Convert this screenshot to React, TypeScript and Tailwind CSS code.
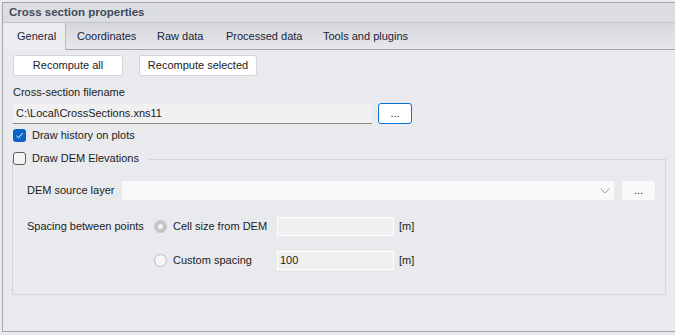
import React from "react";

const tabs = [
  { label: "General", w: "w-[63px]" },
  { label: "Coordinates", w: "w-[80px]" },
  { label: "Raw data", w: "w-[69px]" },
  { label: "Processed data", w: "w-[97px]" },
  { label: "Tools and plugins", w: "w-[110px]" },
];

function Checkbox({ checked }: { checked?: boolean }) {
  if (checked) {
    return (
      <span className="flex h-[13px] w-[13px] items-center justify-center rounded-[3px] bg-[#0a62c9]">
        <svg width="9" height="9" viewBox="0 0 9 9">
          <path d="M1.5 4.8 L3.6 6.8 L7.5 2.2" fill="none" stroke="#ffffff" strokeWidth="1" />
        </svg>
      </span>
    );
  }
  return <span className="h-[13px] w-[13px] rounded-[3px] border border-[#5f5f5f] bg-[#f4f4f4]" />;
}

function Radio({ checked }: { checked?: boolean }) {
  if (checked) {
    return (
      <span className="flex h-[13px] w-[13px] items-center justify-center rounded-full bg-[#c4c5c8]">
        <span className="h-[5px] w-[5px] rounded-full bg-[#f4f4f4]" />
      </span>
    );
  }
  return <span className="h-[13px] w-[13px] rounded-full border border-[#b9babd] bg-[#f6f6f7]" />;
}

export default function App() {
  return (
    <div
      className="h-[335px] w-[675px] overflow-hidden bg-[#e9eaee] pt-[2px] pl-[2px] text-[11px] text-[#1b1b1b]"
      style={{ fontFamily: '"Liberation Sans", Arial, sans-serif' }}
    >
      <div className="flex h-[330px] flex-col border-t border-l border-b border-[#a5a6a9]">
        <div className="flex h-[20px] items-center border-b border-[#c4c5c9] bg-[#dcdde1] pl-[6px] pt-px text-[11.5px] font-bold text-[#3f4b5c]">
          Cross section properties
        </div>
        <div className="flex h-[27px] items-stretch border-b border-[#a2a3a6] bg-gradient-to-b from-[#d6d7db] to-[#e7e8ec]">
          {tabs.map((t, i) => (
            <div
              key={t.label}
              className={
                i === 0
                  ? `-mb-px flex ${t.w} items-center border-r border-[#b7b8bb] bg-[#ebecf0] pl-[14px] text-[#1d1d3a]`
                  : `flex ${t.w} shrink-0 items-center pl-[11px] text-[#1d1d3a]`
              }
            >
              {t.label}
            </div>
          ))}
        </div>

        <div className="flex flex-1 flex-col px-[10px]">
          <div className="mt-[5px] flex gap-[16px]">
            <button className="h-[21px] w-[110px] rounded-[3px] border border-[#d3d4d7] bg-white text-[#1b1b1b]">
              Recompute all
            </button>
            <button className="h-[21px] w-[118px] rounded-[3px] border border-[#d3d4d7] bg-white text-[#1b1b1b]">
              Recompute selected
            </button>
          </div>

          <div className="mt-[8px] leading-[16px]">Cross-section filename</div>
          <div className="mt-[3px] flex h-[21px] items-center gap-[6px]">
            <div className="flex h-[20px] w-[359px] items-center border-b border-[#8a8a8a] bg-[#f0f0f0] pl-[3px]">
              C:\Local\CrossSections.xns11
            </div>
            <button className="flex h-[21px] w-[34px] items-center justify-center rounded-[3px] border-[1.5px] border-[#0a74d6] bg-white pb-[1px]">
              ...
            </button>
          </div>

          <div className="mt-[5px] flex h-[13px] items-center gap-[6px]">
            <Checkbox checked />
            <span>Draw history on plots</span>
          </div>

          <div className="mt-[10px] flex h-[13px] items-center gap-[6px]">
            <Checkbox />
            <span>Draw DEM Elevations</span>
            <div className="ml-[4px] mt-[1px] -mr-px h-px flex-1 bg-[#d4d5d8]" />
          </div>

          <div className="-mx-px mt-[-6px] flex h-[136px] flex-col border-r border-b border-l border-[#d4d5d8] pl-[14px] pr-[10px]">
            <div className="mt-[22px] flex h-[19px] items-center">
              <span className="w-[95px] whitespace-nowrap">DEM source layer</span>
              <div className="flex h-[19px] flex-1 items-center justify-end bg-[#f9f9f9] pr-[4px]">
                <svg width="10" height="6" viewBox="0 0 10 6">
                  <path d="M0.5 0.5 L5 5 L9.5 0.5" fill="none" stroke="#a0a0a0" strokeWidth="1" />
                </svg>
              </div>
              <button className="ml-[8px] flex h-[19px] w-[33px] items-center justify-center rounded-[3px] bg-[#f9f9f9] pb-[1px]">
                ...
              </button>
            </div>

            <div className="mt-[17px] flex h-[19px] items-center">
              <span className="w-[127px] whitespace-nowrap">Spacing between points</span>
              <Radio checked />
              <span className="ml-[6px] w-[104px] whitespace-nowrap">Cell size from DEM</span>
              <div className="h-[19px] w-[117px] border border-white bg-[#f0f0f0]" />
              <span className="ml-[5px]">[m]</span>
            </div>

            <div className="mt-[15px] flex h-[19px] items-center">
              <span className="w-[127px]" />
              <Radio />
              <span className="ml-[6px] w-[104px] whitespace-nowrap">Custom spacing</span>
              <div className="flex h-[19px] w-[117px] items-center border border-white bg-[#f0f0f0] pl-[2px]">
                100
              </div>
              <span className="ml-[5px]">[m]</span>
            </div>
          </div>
        </div>
      </div>
    </div>
  );
}
